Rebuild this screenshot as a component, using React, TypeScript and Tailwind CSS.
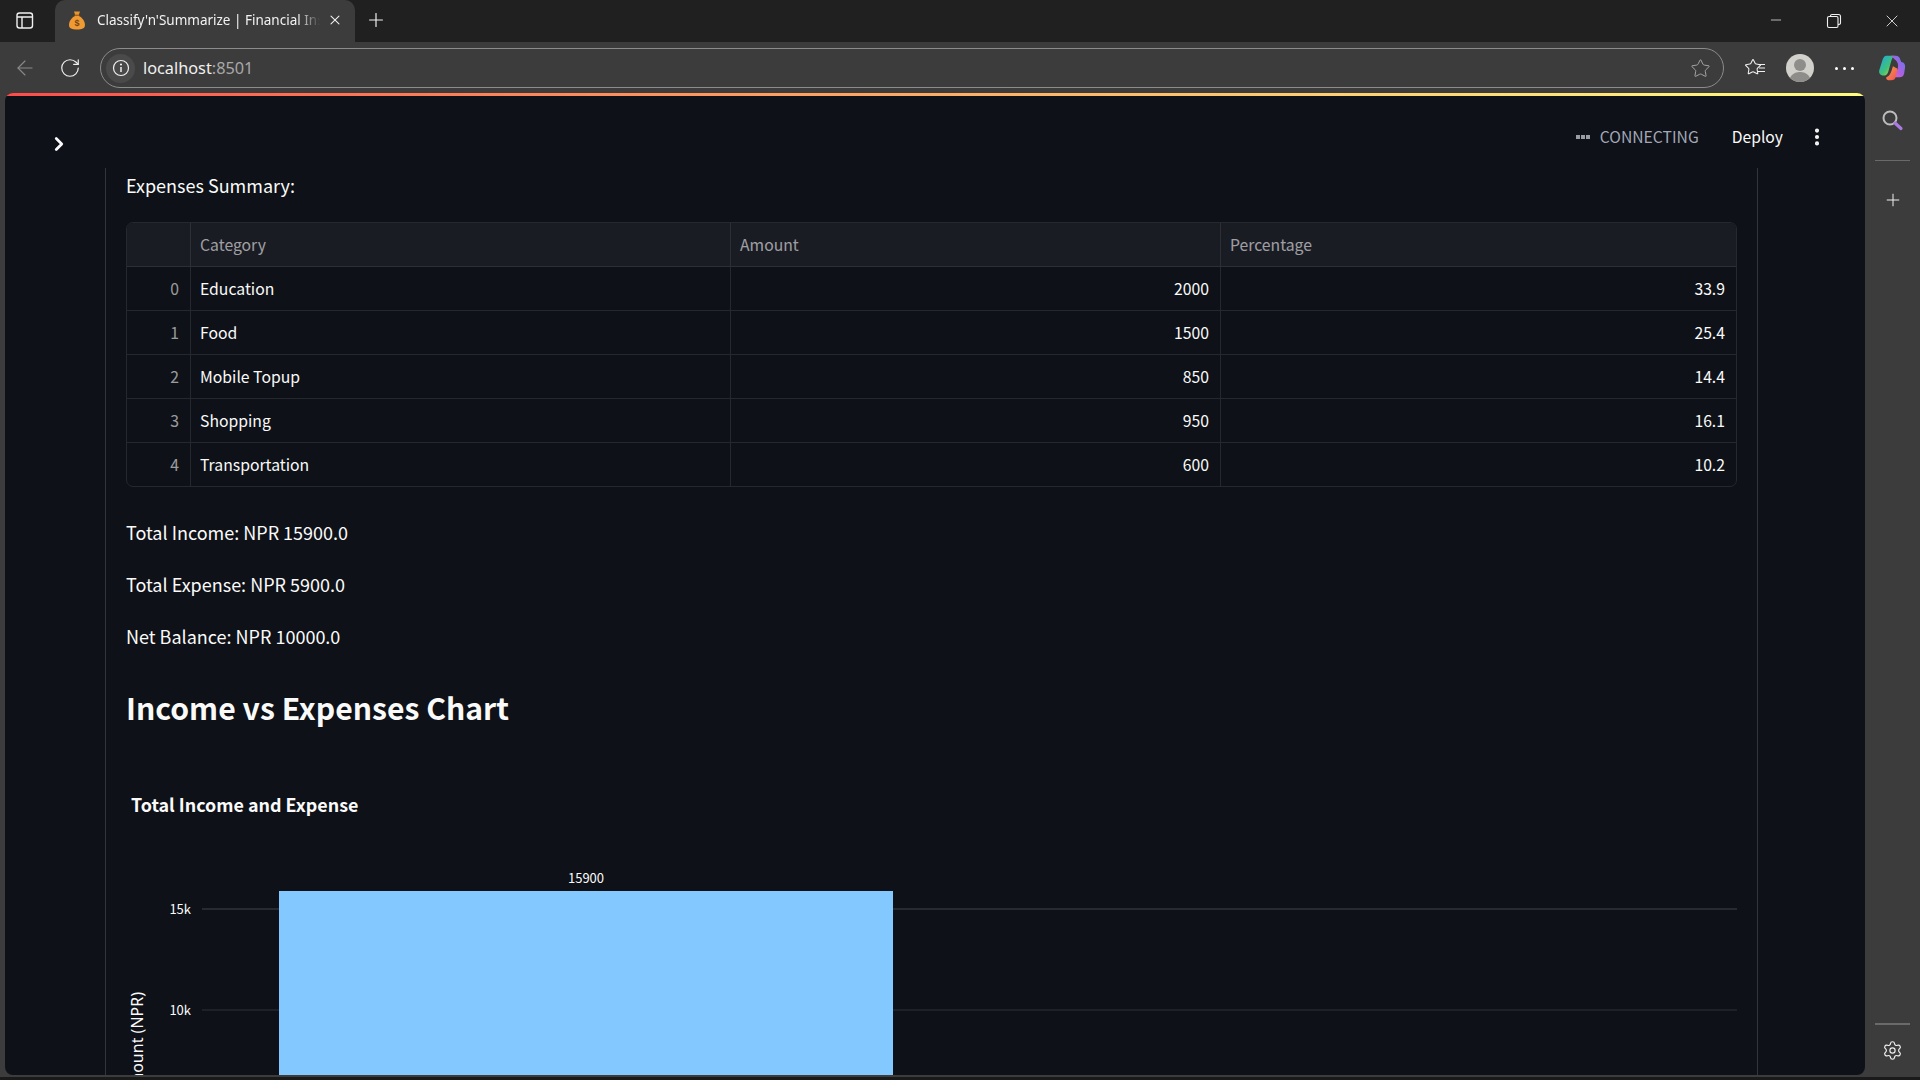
import React from 'react';
import { ChevronRight, EllipsisVertical, Plus, RotateCw, ArrowLeft, Star, X, Minus, Settings } from 'lucide-react';

const streamlitFont = { fontFamily: '"Noto Sans CJK SC", "Noto Sans", sans-serif' };

const rows = [
    { index: 0, category: 'Education', amount: 2000, percentage: '33.9' },
    { index: 1, category: 'Food', amount: 1500, percentage: '25.4' },
    { index: 2, category: 'Mobile Topup', amount: 850, percentage: '14.4' },
    { index: 3, category: 'Shopping', amount: 950, percentage: '16.1' },
    { index: 4, category: 'Transportation', amount: 600, percentage: '10.2' },
];

const cols = 'grid grid-cols-[64px_540px_490px_1fr]';

const MoneyBag = () => (
    <svg width="18" height="20" viewBox="0 0 18 20">
        <path d="M6 1.500 L12 1.500 L10.800 5 L7.200 5 Z" fill="#e8952c" />
        <rect x="6.600" y="4.600" width="4.800" height="1.400" fill="#a85f1c" />
        <path d="M7 6 C3 8 1 12 1 15 C1 18.500 4 19.500 9 19.500 C14 19.500 17 18.500 17 15 C17 12 15 8 11 6 Z" fill="#f09a33" />
        <text x="9" y="16.500" fontSize="9" fontWeight="700" textAnchor="middle" fill="#7a4413" fontFamily="Liberation Sans, sans-serif">$</text>
    </svg>
);

const Copilot = () => (
    <svg width="28" height="28" viewBox="0 0 30 30">
        <defs>
            <linearGradient id="cpA" x1="0" y1="0" x2="1" y2="1">
                <stop offset="0" stopColor="#1fa5e8" />
                <stop offset="0.55" stopColor="#3fc27a" />
                <stop offset="1" stopColor="#f4d23c" />
            </linearGradient>
            <linearGradient id="cpB" x1="1" y1="0" x2="0" y2="1">
                <stop offset="0" stopColor="#5b7cf0" />
                <stop offset="0.6" stopColor="#b35ee0" />
                <stop offset="1" stopColor="#e86bb0" />
            </linearGradient>
            <linearGradient id="cpC" x1="0" y1="0" x2="1" y2="1">
                <stop offset="0" stopColor="#f9a03c" />
                <stop offset="1" stopColor="#ee4d5f" />
            </linearGradient>
        </defs>
        <path d="M9 2 H18 C16 3 15 5 14 8 L11 19 C10.500 21 9 23 7 23 H5 C2 23 0.500 20 1.500 17 L5 6 C6 3.500 7 2 9 2 Z" fill="url(#cpA)" />
        <path d="M14 2 H19 C22 2 23.500 4 24 6.500 L25 8.500 C28 9 29.500 11 29 14.500 L28 21 C27.500 24 25.500 25 23 25 H17 L21 16 C22.500 12 21 8 18 6 Z" fill="url(#cpB)" />
        <path d="M9 25 C12 24 13.500 21 14.500 18 L16 13 C18 14 20 15 21 16 L19 24 C18.500 27 17 28 14 28 H11 C9 28 8.500 26 9 25 Z" fill="url(#cpC)" />
    </svg>
);

const TabBar = () => (
    <div className="flex h-[42px] shrink-0 items-end bg-[#202020] text-white">
        <div className="flex h-full w-[49px] items-center justify-center pb-[2px]">
            <svg width="20" height="20" viewBox="0 0 20 20" fill="none" stroke="#f0f0f0" strokeWidth="1.400">
                <rect x="2" y="3" width="15.500" height="15" rx="2.500" />
                <path d="M2 7 H17.500 M7 7 V18" />
            </svg>
        </div>
        <div className="ml-[6px] flex h-[42px] w-[300px] items-center rounded-t-[10px] bg-[#3c3c3c] pb-[2px] pl-[13px] pr-[12px]">
            <MoneyBag />
            <span className="ml-[11px] w-[224px] overflow-hidden whitespace-nowrap text-[13.500px] text-[#f2f2f2] [font-family:'Noto_Sans',sans-serif] [mask-image:linear-gradient(to_right,black_90%,transparent)]">
                Classify'n'Summarize | Financial Insights
            </span>
            <X size={16} strokeWidth={1.600} className="ml-[7px] text-[#f0f0f0]" />
        </div>
        <div className="flex h-full w-[42px] items-center justify-center pb-[2px]">
            <Plus size={22} strokeWidth={1.300} className="text-[#f0f0f0]" />
        </div>
        <div className="ml-auto flex h-full items-center pb-[1px] pr-[18px] text-[#f0f0f0]">
            <Minus size={16} strokeWidth={1.100} className="mb-[2px]" />
            <svg width="16" height="16" viewBox="0 0 16 16" fill="none" stroke="currentColor" strokeWidth="1.100" className="ml-[42px]">
                <rect x="1.500" y="3.500" width="10.500" height="11" rx="1.500" />
                <path d="M4.500 3.500 V2.800 C4.500 1.800 5 1.500 6 1.500 H12.500 C14 1.500 14.500 2 14.500 3.500 V10 C14.500 11 14 11.500 12 11.500" />
            </svg>
            <X size={20} strokeWidth={1} className="ml-[40px]" />
        </div>
    </div>
);

const Toolbar = () => (
    <div className="flex h-[51px] shrink-0 items-center bg-[#3c3c3c] pt-[1px] text-[#f0f0f0]">
        <ArrowLeft size={24} strokeWidth={1.100} className="ml-[13px] text-[#8a8a8a]" />
        <RotateCw size={22} strokeWidth={1.300} className="ml-[22px]" />
        <div className="ml-[19px] flex h-[40px] w-[1624px] items-center rounded-full border border-[#8c8c8c] pl-[5px] pr-[12px]">
            <div className="flex h-[29px] w-[29px] items-center justify-center rounded-full bg-[#4a4a4a]">
                <svg width="18" height="18" viewBox="0 0 18 18" fill="none" stroke="#f0f0f0" strokeWidth="1.200">
                    <circle cx="9" cy="9" r="7.500" />
                    <path d="M9 8 V13" strokeWidth="1.500" />
                    <circle cx="9" cy="5.500" r="0.500" fill="#f0f0f0" />
                </svg>
            </div>
            <span className="ml-[8px] text-[16.300px] [font-family:'Noto_Sans',sans-serif]">
                localhost<span className="text-[#a8a8a8]">:8501</span>
            </span>
            <Star size={21} strokeWidth={1.100} className="ml-auto text-[#a8a8a8]" />
        </div>
        <div className="relative ml-[20px] h-[22px] w-[22px]">
            <Star size={18} strokeWidth={1.400} className="absolute left-0 top-[1px]" />
            <svg width="10" height="10" viewBox="0 0 10 10" stroke="currentColor" strokeWidth="1.200" className="absolute right-0 top-[6px]">
                <path d="M2 1.500 H9 M3 5 H9 M2 8.500 H9" />
            </svg>
        </div>
        <div className="relative ml-[20px] h-[28px] w-[28px] overflow-hidden rounded-full bg-[#d2d0cb]">
            <div className="absolute left-[8px] top-[5px] h-[12px] w-[12px] rounded-full bg-[#8f8d89]" />
            <div className="absolute left-[3px] top-[18px] h-[20px] w-[22px] rounded-full bg-[#8f8d89]" />
        </div>
        <div className="ml-[21px] flex gap-[3px]">
            <div className="h-[3px] w-[3px] rounded-full bg-white" />
            <div className="ml-[2px] h-[3px] w-[3px] rounded-full bg-white" />
            <div className="ml-[2px] h-[3px] w-[3px] rounded-full bg-white" />
        </div>
        <div className="ml-[24px]"><Copilot /></div>
    </div>
);

const SideRail = () => (
    <div className="flex w-[55px] shrink-0 flex-col items-center bg-[#3c3c3c] text-[#f0f0f0]">
        <svg width="24" height="24" viewBox="0 0 24 24" fill="none" className="mr-[2px] mt-[15px]">
            <circle cx="10" cy="10" r="6.500" stroke="#bdbdbd" strokeWidth="2" />
            <path d="M15 15 L21 20.500" stroke="#a97be0" strokeWidth="3.200" strokeLinecap="round" />
        </svg>
        <div className="mt-[28px] h-px w-[35px] bg-[#6a6a6a]" />
        <Plus size={20} strokeWidth={1.200} className="mt-[29px]" />
        <div className="mt-auto h-[2px] w-[35px] bg-[#6a6a6a]" />
        <Settings size={21} strokeWidth={1.300} className="mb-[14px] mt-[15px]" />
    </div>
);

const DataTable = () => (
    <div className="w-[1611px] overflow-hidden rounded-[7px] border border-[#262830] text-[15.750px] leading-[24px]">
        <div className={`${cols} h-[44px] items-center border-b border-[#2d2f37] bg-[#1a1c24] text-[#fafafa]/60`}>
            <div className="h-full border-r border-[#2d2f37]" />
            <div className="flex h-full items-center border-r border-[#2d2f37] pl-[9px]">Category</div>
            <div className="flex h-full items-center border-r border-[#2d2f37] pl-[9px]">Amount</div>
            <div className="pl-[9px]">Percentage</div>
        </div>
        {rows.map(row => (
            <div key={row.index} className={`${cols} h-[44px] items-center border-b border-[#262830] text-[#fafafa] last:h-[43px] last:border-b-0`}>
                <div className="flex h-full items-center justify-end border-r border-[#262830] pr-[11px] text-[#fafafa]/60">{row.index}</div>
                <div className="flex h-full items-center border-r border-[#262830] pl-[9px]">{row.category}</div>
                <div className="flex h-full items-center justify-end border-r border-[#262830] pr-[11px]">{row.amount}</div>
                <div className="pr-[11px] text-right">{row.percentage}</div>
            </div>
        ))}
    </div>
);

const IncomeChart = () => (
    <svg width="1631" height="310" viewBox="0 0 1631 310" className="block shrink-0" style={streamlitFont}>
        <text x="25" y="42" fontSize="17.900" fontWeight="700" fill="#fafafa">Total Income and Expense</text>
        <line x1="96" y1="139" x2="1631" y2="139" stroke="#31333a" strokeWidth="1.500" />
        <line x1="96" y1="240" x2="1631" y2="240" stroke="#31333a" />
        <rect x="173" y="121" width="614" height="189" fill="#83c9ff" />
        <text x="480" y="113" fontSize="13" textAnchor="middle" fill="#fafafa">15900</text>
        <text x="85" y="144" fontSize="13" textAnchor="end" fill="#fafafa">15k</text>
        <text x="85" y="245" fontSize="13" textAnchor="end" fill="#fafafa">10k</text>
        <text transform="translate(37 328) rotate(-90)" fontSize="16" fill="#fafafa" fontFamily="Noto Sans, sans-serif">Amount (NPR)</text>
    </svg>
);

const StreamlitPage = () => (
    <div className="flex min-w-0 flex-1 flex-col overflow-hidden rounded-[8px] bg-[#0e1117] text-[#fafafa]" style={streamlitFont}>
        <div className="h-[3px] shrink-0 bg-gradient-to-r from-[#ff4b4b] to-[#fffd80]" />
        <div className="flex h-[72px] shrink-0 items-center pl-[43px] pr-[37px] pt-[9px]">
            <ChevronRight size={22} strokeWidth={3} className="mt-[14px]" />
            <div className="ml-auto flex items-center">
                <div className="flex gap-[1px]">
                    <div className="h-[4px] w-[4px] bg-[#9a9ca3]" />
                    <div className="h-[4px] w-[4px] bg-[#9a9ca3]" />
                    <div className="h-[4px] w-[4px] bg-[#9a9ca3]" />
                </div>
                <span className="ml-[10px] text-[15.700px] leading-[24px] text-[#a3a8b8]">CONNECTING</span>
                <span className="ml-[33px] text-[15.700px] leading-[24px]">Deploy</span>
                <EllipsisVertical size={22} strokeWidth={2.500} className="ml-[23px]" />
            </div>
        </div>
        <div className="ml-[100px] flex min-h-0 w-[1653px] flex-1 flex-col overflow-hidden border-x border-[#33353c] pl-[20px]">
            <p className="mt-[3px] text-[18px] leading-[28px]">Expenses Summary:</p>
            <div className="mt-[23px]"><DataTable /></div>
            <p className="mt-[31px] text-[18px] leading-[28px]">Total Income: NPR 15900.0</p>
            <p className="mt-[24px] text-[18px] leading-[28px]">Total Expense: NPR 5900.0</p>
            <p className="mt-[24px] text-[18px] leading-[28px]">Net Balance: NPR 10000.0</p>
            <h2 className="mt-[32px] text-[30.150px] font-semibold leading-[50px]">Income vs Expenses Chart</h2>
            <div className="-ml-[20px] mt-[38px]"><IncomeChart /></div>
        </div>
    </div>
);

export default function App() {
    return (
        <div className="flex h-screen w-full flex-col overflow-hidden bg-[#1a1a1a]">
            <TabBar />
            <Toolbar />
            <div className="flex h-[984px] shrink-0 bg-[#3c3c3c] pb-[2px] pl-[5px]">
                <StreamlitPage />
                <SideRail />
            </div>
        </div>
    );
}
